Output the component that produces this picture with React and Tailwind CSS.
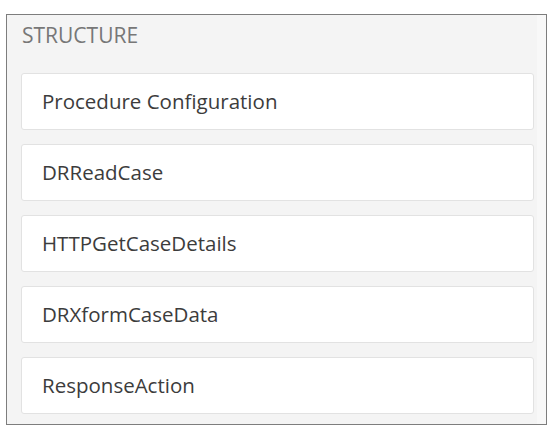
const items = [
  'Procedure Configuration',
  'DRReadCase',
  'HTTPGetCaseDetails',
  'DRXformCaseData',
  'ResponseAction',
]

export default function App() {
  return (
    <div className="w-[556px] h-[433px] bg-white pt-[14px] pl-[6px] font-['Open_Sans',sans-serif]">
      <div className="w-[541px] h-[411px] border-[1.5px] border-[#7d7d7d] bg-[#f4f4f4] flex">
        <div className="flex-1 pl-[14px] pr-[3px]">
          <div className="h-[58px] pt-[6px] pl-[1px] text-[21px] leading-[28px] text-[#777]">
            STRUCTURE
          </div>
          <div className="flex flex-col gap-[14px]">
            {items.map((name) => (
              <div
                key={name}
                className="h-[57px] bg-white border border-[#e2e2e2] rounded-[3px] flex items-center pl-[20px] text-[20.5px] text-[#3c3c3c]"
              >
                {name}
              </div>
            ))}
          </div>
        </div>
        <div className="w-[9px] bg-[#f8f8f8]" />
      </div>
    </div>
  )
}
